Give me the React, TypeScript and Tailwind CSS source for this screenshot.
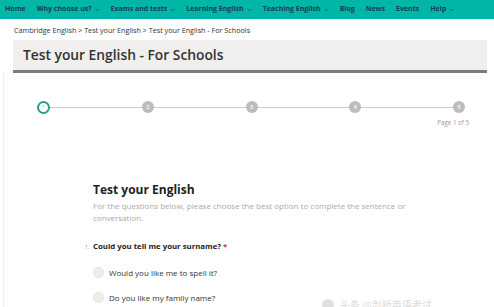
import React from "react";

const Chevron = () => (
  <svg width="5" height="4" viewBox="0 0 6 4" className="ml-[3px] inline-block">
    <path d="M0.8 0.8 L3 3 L5.2 0.8" fill="none" stroke="currentColor" strokeWidth="0.9" />
  </svg>
);

const navItems: { label: string; chev?: boolean }[] = [
  { label: "Home" },
  { label: "Why choose us?", chev: true },
  { label: "Exams and tests", chev: true },
  { label: "Learning English", chev: true },
  { label: "Teaching English", chev: true },
  { label: "Blog" },
  { label: "News" },
  { label: "Events" },
  { label: "Help", chev: true },
];

export default function App() {
  const steps = [1, 2, 3, 4, 5];
  return (
    <div
      className="w-[494px] h-[307px] overflow-hidden bg-white relative"
      style={{ fontFamily: '"Open Sans", "Noto Sans", sans-serif' }}
    >
      {/* nav */}
      <div className="h-[19px] bg-[#00b6a6] flex items-center pl-[5px] gap-[11px] text-[7px] font-bold text-[#1d3b5c]">
        {navItems.map((n) => (
          <span key={n.label} className="flex items-center whitespace-nowrap">
            {n.label}
            {n.chev && <Chevron />}
          </span>
        ))}
      </div>

      {/* breadcrumb */}
      <div className="pl-[14px] pt-[6px] h-[21px] text-[7.2px] text-[#333] whitespace-nowrap">
        Cambridge English &gt; Test your English &gt; Test your English - For Schools
      </div>

      {/* title bar */}
      <div className="ml-[13px] mr-[7px] h-[33px] bg-[#f0efed] border-b-[3px] border-[#7b7b7b] flex items-center pl-[10px]">
        <span className="text-[13.8px] font-semibold text-[#333]">Test your English - For Schools</span>
      </div>

      {/* body container */}
      <div className="ml-[3px] border-l border-[#eeeeee] h-[240px]">
        {/* stepper */}
        <div className="pt-[27px] pl-[33px] pr-[29px]">
          <div className="relative h-[14px]">
            <div className="absolute left-[6px] right-[6px] top-[6.5px] h-px bg-[#cccccc]" />
            <div className="relative flex justify-between items-center h-[14px]">
              {steps.map((s) =>
                s === 1 ? (
                  <div
                    key={s}
                    className="w-[13px] h-[13px] rounded-full border-2 border-[#1ea585] bg-white flex items-center justify-center text-[4px] text-[#1ea585]"
                  >
                    1
                  </div>
                ) : (
                  <div
                    key={s}
                    className="w-[12px] h-[12px] rounded-full bg-[#bdbdbd] flex items-center justify-center text-[4.5px] font-bold text-white"
                  >
                    {s}
                  </div>
                )
              )}
            </div>
          </div>
          <div className="text-right text-[6.2px] text-[#999] mt-[4px] -mr-[4px]">Page 1 of 5</div>
        </div>

        {/* content */}
        <div className="pl-[89px] pt-[55px]">
          <div className="text-[12px] font-bold text-[#222] leading-[16px]">Test your English</div>
          <div className="text-[8px] text-[#aaa] leading-[12px] mt-[2px] w-[330px]">
            For the questions below, please choose the best option to complete the sentence or conversation.
          </div>

          <div className="mt-[17px] flex items-baseline">
            <span className="text-[5px] text-[#888] w-[8px] -ml-[8px]">1.</span>
            <span className="text-[7.8px] font-bold text-[#222]">
              Could you tell me your surname? <span className="text-[#d0314b]">*</span>
            </span>
          </div>

          <div className="mt-[14px] flex flex-col gap-[13px]">
            {["Would you like me to spell it?", "Do you like my family name?"].map((t) => (
              <div key={t} className="flex items-center gap-[5px]">
                <div className="w-[11px] h-[11px] rounded-full bg-[#eeeeee] border border-[#e4e4e4]" />
                <span className="text-[8px] text-[#333]">{t}</span>
              </div>
            ))}
          </div>
        </div>
      </div>

      {/* watermark */}
      <div className="absolute left-[322px] top-[297px] flex items-center gap-[6px] opacity-30 text-[#888]">
        <div className="w-[12px] h-[12px] rounded-full bg-[#999]" />
        <span className="text-[10px] whitespace-nowrap" style={{ fontFamily: '"Noto Sans CJK SC", sans-serif' }}>
          头条 @剑桥英语考试
        </span>
      </div>
    </div>
  );
}
